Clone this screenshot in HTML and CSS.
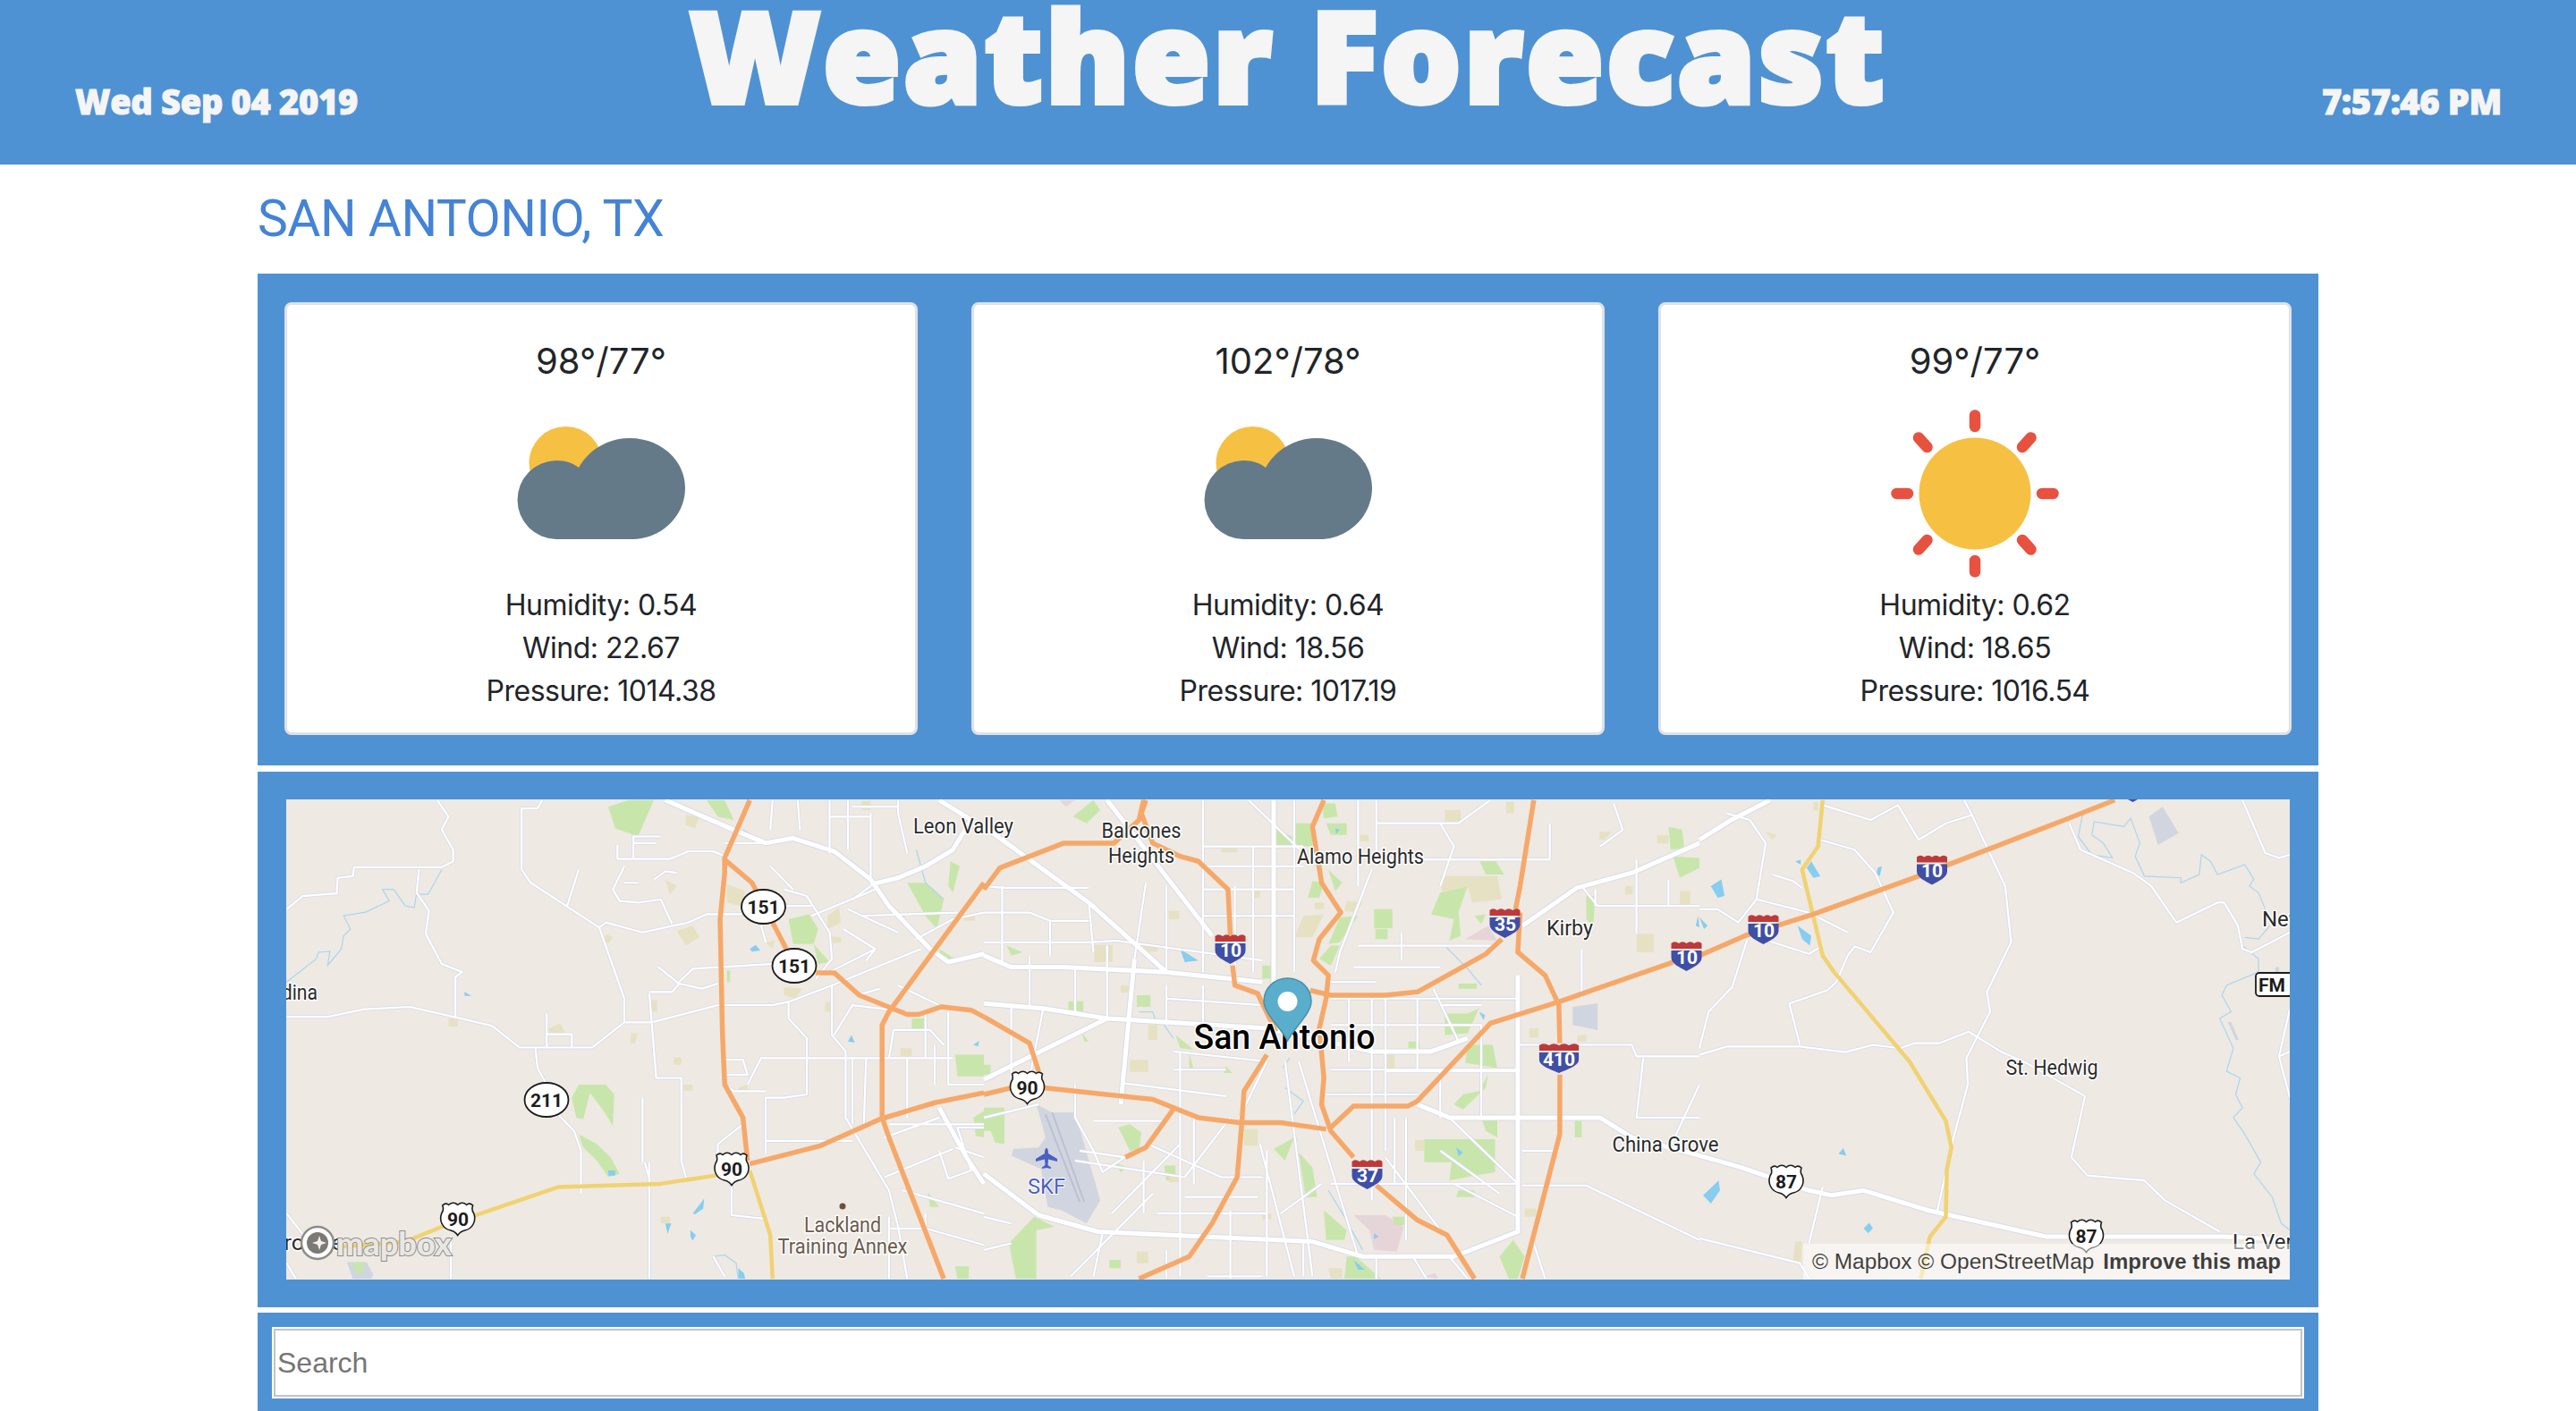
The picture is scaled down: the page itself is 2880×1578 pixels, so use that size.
FILE: index.html
```html
<!DOCTYPE html>
<html lang="en">
<head>
    <meta charset="UTF-8">
    <meta name="viewport" content="width=device-width, initial-scale=1.0">
    <title>Weather Forecast</title>
    <link rel="stylesheet" href="styles.css">
</head>
<body>
    <header class="top-bar">
        <span class="top-date">Wed Sep 04 2019</span>
        <h1 class="top-title">Weather Forecast</h1>
        <span class="top-time">7:57:46 PM</span>
    </header>
    <main class="content">
        <h2 class="city">SAN ANTONIO, TX</h2>

        <section class="forecast">
            <article class="card">
                <h3 class="temp">98°/77°</h3>
                <svg class="weather-icon" viewBox="0 0 188 188"><use href="#icon-cloudy"/></svg>
                <p class="stat">Humidity: 0.54</p>
                <p class="stat">Wind: 22.67</p>
                <p class="stat">Pressure: 1014.38</p>
            </article>
            <article class="card">
                <h3 class="temp">102°/78°</h3>
                <svg class="weather-icon" viewBox="0 0 188 188"><use href="#icon-cloudy"/></svg>
                <p class="stat">Humidity: 0.64</p>
                <p class="stat">Wind: 18.56</p>
                <p class="stat">Pressure: 1017.19</p>
            </article>
            <article class="card">
                <h3 class="temp">99°/77°</h3>
                <svg class="weather-icon" viewBox="0 0 188 188"><use href="#icon-sunny"/></svg>
                <p class="stat">Humidity: 0.62</p>
                <p class="stat">Wind: 18.65</p>
                <p class="stat">Pressure: 1016.54</p>
            </article>
        </section>

        <section class="map-box">
            <div class="map">
                <svg class="map-svg" viewBox="320 894 2240 537">
                    <defs>
                        <!-- roads are traced in three strips, each with its own scale -->
                        <g id="minor-roads">
                            <g transform="translate(300 880) scale(.5102 .3699)">
                                <path d="M40 370L75 330L150 322L152 275L185 270L188 243H380L405 225V190L380 130L395 90L370 40"/>
                                <path d="M40 695H130L210 672L310 665L490 722L550 788H710L780 712H840L985 660H1105L1140 650L1235 600L1430 490"/>
                                <path d="M410 695V575L425 560L380 535L345 445L352 375L325 320L330 250"/>
                                <path d="M600 40L590 65H555V250L575 290L725 425L780 640V712"/>
                                <path d="M725 425L740 410L820 440L920 410L960 385H1040"/>
                                <path d="M655 360L680 250M585 790L590 850L610 900M635 990L670 1040L685 1100V1230"/>
                                <path d="M610 685V790M612 748H665V790"/>
                                <path d="M835 625L850 880H905V1130L915 1180M835 1135V1487M825 1135L836 1190"/>
                                <path d="M765 175V218H880L920 195H975L1010 215M800 218V150H860M800 170H850"/>
                                <path d="M855 545L900 595L885 620H835M900 595L950 610L985 595M900 590L930 550L1110 535"/>
                                <path d="M780 240L755 310L770 345L810 350L860 340L885 415M780 290L810 290M845 280L870 255L895 260"/>
                                <path d="M1130 310L1180 330L1230 440L1235 520L1200 580M1140 650V700L1180 760V930L1130 940H1090V1110"/>
                                <path d="M1000 825H1040L1050 870H1000M1050 900L1080 820H1500M1000 900L1020 920H1090"/>
                                <path d="M1235 600V750L1265 800V1000L1360 1220L1380 1330L1400 1487"/>
                                <path d="M1310 820L1305 1020M1350 1180L1500 1095M1390 1220L1568 1290M1360 1335H1440L1568 1385"/>
                                <path d="M1040 1020L985 1080V1130M1090 1070H1280M1015 1200V1295L1085 1305M400 1360V1487"/>
                                <path d="M1240 750L1280 660L1400 680M1290 630L1340 610M1490 680V900M1230 560L1330 490M1260 430L1330 490L1310 525"/>
                                <path d="M1270 370L1380 440M1300 390L1510 380M1280 340L1320 300M1370 735H1450L1480 780M1370 735L1360 820M1460 780V900"/>
                                <path d="M1080 420L1090 470M1105 40L1100 130M1160 40L1165 130M1230 40V200M1270 40V190M1320 80V280M1380 40V80L1400 200"/>
                                <path d="M1130 360H1190M1190 390L1330 310M1280 60H1380M1230 90H1320"/>
                                <path d="M1470 1100L1490 1185L1540 1160L1510 1030H1568M1505 1090L1568 1120M1360 1300V1487M1440 1290V1330"/>
                                <path d="M40 1290L80 1360M40 1440L60 1487M975 1420L1000 1480M820 940V1135"/>
                                <path d="M1380 600L1470 660M1440 680V820M1400 820V1000M1360 1020H1568M1470 1000L1350 1060M1100 240L1150 310M1000 170H1100M1420 460L1500 400L1568 380M1280 820V1020M1490 900H1568"/>
                            </g>
                            <g transform="translate(1100 880) scale(.5102 .3699)">
                                <path d="M0 380H100L145 405H230M0 470H230L290 465L610 525M40 300V540M230 350L240 500M355 290L330 520M145 405V510"/>
                                <path d="M480 40V560M680 40V560M820 40V300M860 40V240M850 250L780 500L770 560M580 40L700 200"/>
                                <path d="M860 110H1040L1110 40M480 180H700M860 220H1240M1240 110V220M1000 110L1030 180L1000 300M1380 50L1400 130L1350 180"/>
                                <path d="M915 440V525M820 480H1120M810 545H1000M750 590H860M760 640H1170M985 610L1040 770M1000 660H1090"/>
                                <path d="M1170 780H1262M1262 780H1420L1430 815H1568M760 855H1170M850 640V1250M880 640V1100M925 1000V1370"/>
                                <path d="M1020 1000L1170 1200M1180 1100H1260M1180 1205H1320L1568 1370M760 1200H1170M740 1200L650 1290M880 1120L1000 1340"/>
                                <path d="M430 800V1480M415 800L620 830M415 855H530M300 895L530 935M620 830L560 1000M660 830L720 1480M690 830L820 1420"/>
                                <path d="M200 900V1000L240 1100L260 1165L330 1100M240 1010H400M210 1100L310 1120M360 1080L520 1180H610M380 1290H620"/>
                                <path d="M440 1240H600M490 1480H610M280 1290L430 1080M540 1000L440 1180M620 1100V1480M605 1080L680 1480M190 1480L370 1230"/>
                                <path d="M0 1400L60 1380M0 1300L60 1320M1310 490V640M1310 300L1345 360H1568M1430 220V445M1445 820L1430 1000L1568 1000"/>
                                <path d="M1500 1100L1568 900M1340 310V360M1500 280V360M1000 1100L1130 1230M1030 1200L1170 1300M400 1400V1487M540 1280V1487"/>
                                <path d="M240 1480L260 1350M700 1380V1480M940 1420L970 1487M1020 1420L1060 1487M1200 1360L1230 1487M860 1420V1487"/>
                                <path d="M0 300L40 305H230M480 310H680M480 390H680M480 240H700M590 180V560M550 300V560M400 300V560M270 480V700M100 510V670M200 550V680"/>
                                <path d="M400 600V720M480 600V730M400 640L610 660M130 670L100 880M60 660V880M800 640V830M950 640V860M1000 860V1000M880 860H1170M750 930H950"/>
                                <path d="M760 720H1090M900 1000V1200M1090 720V1000M0 1000L120 960M200 1130L440 1180M460 1000V1200M350 1130V1290"/>
                            </g>
                            <g transform="translate(1900 880) scale(.5102 .3699)">
                                <path d="M270 55L375 100L435 55L480 160L540 110L597 85L670 300L683 470L630 620L637 680L585 820L588 900L555 1070L520 1290M597 85L580 40"/>
                                <path d="M265 160L340 190L385 260L425 380L375 500L340 482L325 510L300 590L280 615L197 655L220 780"/>
                                <path d="M0 810L60 785H220L320 802L380 780L440 790L470 775H525L590 740L660 800L710 830L845 935L815 1120L850 1175L975 1190L1020 1250L1140 1345"/>
                                <path d="M125 340L145 170L110 100L60 80M125 340L240 380M125 340L85 410L40 370H0M160 265L205 285L225 305M240 380L325 440"/>
                                <path d="M150 465L240 505L270 480M105 460L72 605L20 680L0 790"/>
                                <path d="M810 110L835 190L950 260L990 300L1045 410L1135 350H1150L1180 420L1190 490L1210 500L1294 440M1190 40L1240 200L1270 215L1294 205"/>
                                <path d="M1294 670L1270 815L1294 940M1294 800L1270 815M270 1210L240 1380M0 1365L220 1440L240 1487"/>
                            </g>
                        </g>
                        <g id="wide-roads">
                            <g transform="translate(300 880) scale(.5102 .3699)">
                                <path d="M870 40L1020 130L1090 170L1150 155L1240 195L1320 280L1360 360L1450 490L1490 530L1568 505"/>
                                <path d="M1320 295L1380 275L1440 240L1500 190L1540 100L1470 40M1470 970L1530 1120L1568 1200"/>
                            </g>
                            <g transform="translate(1100 880) scale(.5102 .3699)">
                                <path d="M635 40V700M0 510L60 545H170L400 560L610 590M0 655L130 670L270 700L620 730L850 800H980L1060 760M0 885L270 700"/>
                                <path d="M330 520L300 960M0 120L230 350L400 560M270 40L500 450"/>
                                <path d="M0 1170L120 1295L250 1345L720 1375L830 1420H1030L1170 1345V570"/>
                                <path d="M1180 420L1300 305L1420 260L1568 170M950 960L1020 1000H1350L1420 1060L1568 1115"/>
                            </g>
                            <g transform="translate(1900 880) scale(.5102 .3699)">
                                <path d="M155 40L70 100L0 160M0 1115L90 1150L240 1220L290 1235L360 1220L500 1280L760 1360H1150L1294 1370"/>
                            </g>
                        </g>
                        <path id="shield-inter" d="M-18.5-15Q-14-19.5-9.3-15.5Q-4.6-19.5 0-15.5Q4.6-19.5 9.3-15.5Q14-19.5 18.5-15V2C18.5 10 8 14 0 19C-8 14-18.5 10-18.5 2Z"/>
                        <g id="inter">
                            <use href="#shield-inter" class="shield-edge"/>
                            <path class="shield-red" d="M-17-14Q-13.5-17.5-8.5-14Q-4.5-17.5 0-14Q4.5-17.5 8.5-14Q13.5-17.5 17-14V-8H-17Z"/>
                            <path class="shield-blue" d="M-17-6H17V2C17 9 7 13 0 17C-7 13-17 9-17 2Z"/>
                        </g>
                        <g id="us">
                            <path class="shield-us" d="M-17-15Q-13-18.500-10-15.500Q-5-20 0-15.500Q5-20 10-15.500Q13-18.500 17-15Q15-10 18-6C21 2 17 11 8 13Q3 14 0 18.500Q-3 14-8 13C-17 11-21 2-18-6Q-15-10-17-15Z"/>
                        </g>
                    </defs>

                    <rect class="land" x="320" y="894" width="2240" height="537"/>

                    <g transform="translate(300 880) scale(.5102 .3699)">
                        <path class="airport" d="M172 1437H215L230 1475L225 1487H185Z"/>
                        <path class="park" d="M745 60L790 40H845L810 150L760 125ZM960 40H1000L1020 100L985 90ZM680 900H740L758 930L755 1025L735 980L705 925L690 1005L675 1000L665 940ZM680 1050L720 1080L750 1120L770 1170L745 1180L720 1130L690 1090ZM1140 400L1185 385L1205 430L1195 475L1230 530L1205 535L1195 475H1150ZM1505 810H1568V875H1510ZM1400 290H1440L1480 340L1465 430L1440 390ZM1495 225L1515 240L1500 320L1490 300ZM1410 700H1443V738H1410ZM1470 490L1505 520L1475 525ZM1445 1225L1470 1270H1450ZM1545 1000L1568 980V1060L1550 1055ZM1505 1450H1535V1487H1510ZM185 1437H208V1470H190ZM1005 555H1012V590H1005Z"/>
                        <path class="sand" d="M915 85L945 90L935 125L915 115ZM870 280L895 300L880 325ZM1005 295L1045 315L1035 360L1005 350ZM895 435L930 420L945 455L915 480ZM1225 390L1250 365L1255 410L1225 430ZM1090 470L1110 465L1105 490ZM1130 605L1170 610L1155 640L1130 630ZM395 700H415V725H395ZM740 445L755 455L745 472L735 470ZM840 645H852V680H840ZM615 730L640 715L650 745H615ZM795 745H810L803 775H793ZM888 817H905V840H888ZM910 900H930V918H910ZM1220 650H1232V680H1220ZM1385 790H1410V815H1385ZM1300 42H1320V70H1300ZM1235 452L1255 455V472H1235ZM1525 390H1548V405H1525ZM1030 910L1050 900V925H1035ZM860 1300H880V1320H860Z"/>
                        <path class="water" d="M1055 490L1068 478L1078 495L1060 498ZM430 620L445 632H430ZM1270 770L1278 750L1285 773ZM930 1290L955 1245L953 1275L935 1292ZM925 1340L937 1355L930 1372L925 1360ZM1030 1455L1042 1470L1045 1487H1030ZM745 1160H760V1175H745ZM1545 780L1558 768L1555 785ZM870 1320H883L875 1352Z"/>
                        <path class="stream" d="M40 590L105 520L110 500L135 497L130 540L160 490L165 450L180 430L165 390L215 378L265 345L250 310H275L300 360L320 365L325 320M330 325H350L380 250M1040 130L1080 160M1420 190L1440 290L1480 340M975 1420L1000 1415L1025 1440L1030 1487"/>
                    </g>
                    <g transform="translate(1100 880) scale(.5102 .3699)">
                        <path class="airport" d="M115 960L150 985H200L255 1250L225 1320L170 1280L140 1270L125 1155L60 1115L65 1095L120 1090L135 1060ZM1290 665L1345 655V735L1290 720Z"/>
                        <path class="runway" d="M135 990L210 1255M150 985L220 1255"/>
                        <path class="pink" d="M1055 460L1105 420L1125 465ZM810 1295H880L920 1330L905 1405L855 1400L845 1340ZM165 40H200L180 60ZM965 1480L990 1470L995 1487Z"/>
                        <path class="park" d="M195 90L240 40L255 70L225 110ZM680 110H720V180H680ZM640 130L675 150V180H640ZM740 50H770L775 90L745 95ZM750 110H795V145H760ZM720 285L745 290L735 335H710ZM755 250L785 290L770 315ZM855 370H895V428H855ZM858 430H885V460H858ZM780 395L820 390L780 470L755 475ZM760 480H780L760 540L735 520ZM980 385L1000 320L1060 300L1040 380L1045 450L1020 465L1030 400ZM1085 220H1120L1140 265H1100ZM1075 390L1100 385L1090 415ZM1010 685H1060L1085 670L1060 745L1010 750ZM1040 595H1080V610H1040ZM1060 780H1115L1125 850L1055 835ZM1105 870L1100 910L1050 975L1030 960L1050 930L1085 920ZM930 770H955V790H930ZM965 1065H1120V1165L1075 1175L1020 1190L1025 1135H965ZM1040 1220H1075V1240H1035ZM1090 1000H1125V1060L1100 1040ZM1295 1010H1310V1060H1295ZM1130 1420L1160 1370L1185 1420L1170 1487H1150ZM1320 330H1340L1335 420L1320 400ZM1500 120L1530 130L1535 185L1505 190ZM1510 210L1568 215V245L1525 275ZM335 630H365V665H335ZM185 648H218V680H185ZM50 480L85 500L60 510ZM215 745L230 770H220ZM0 840H15V870H0ZM0 970H45V1080L25 1075L15 1040H0ZM55 1380L110 1300L155 1330L115 1340V1487H70ZM395 1145H420V1190H400ZM275 1430H300V1455H275ZM295 1030L320 1020L345 1045L340 1100H320ZM285 1135L315 1150L300 1165ZM635 1095L680 1060L660 1130ZM690 1105L720 1150L730 1240L705 1240ZM745 1280L795 1340L790 1370H750ZM815 1420L870 1487H790L795 1420ZM895 1300H925V1325H900ZM420 750L460 795L430 790ZM450 805L460 855H450ZM530 845L545 865L525 865ZM610 540H630V580H610Z"/>
                        <path class="sand" d="M520 185H555V198H520ZM590 315H605V335H590ZM825 145H843V165H825ZM1010 70H1045V105H1010ZM1145 45H1162V80H1145ZM1000 270H1125L1135 340L1070 350L1060 300L1005 320ZM700 390L745 385L720 455H680ZM795 345L830 350L815 380L790 375ZM725 350H745V370H725ZM405 375H428V400H405ZM242 478H282V530H242ZM350 478H380V498H350ZM300 600H320V622H300ZM360 720H380V765H360ZM320 825H360V862H320ZM880 810H900V855H880ZM945 1068H965V1100H945ZM1195 730H1215V758H1195ZM570 1035H600V1085H570ZM610 1290H630V1308H610ZM335 1405H360V1440H335ZM1430 445H1468V500H1430ZM1185 1275H1210V1300H1185ZM1300 750H1320V770H1300ZM1405 300H1422V325H1405ZM1525 315H1548V365H1525ZM1475 145H1500V172H1475ZM1350 135H1375L1360 160H1348ZM405 1175H430V1195H405ZM755 1455H785V1487H760Z"/>
                        <path class="water" d="M430 490L470 525L440 530ZM1085 680L1098 690L1095 705ZM770 125L780 130L772 142ZM855 1350L865 1360L855 1368ZM1565 390L1568 425L1560 420ZM1035 1090L1050 1105L1040 1118ZM810 1430L835 1460H820Z"/>
                        <path class="stream" d="M655 850L670 820M660 910L700 950L680 990M755 1220L790 1300L830 1400M340 680H370L375 700L395 720L415 760M1010 480L1060 550L1090 600"/>
                    </g>
                    <g transform="translate(1900 880) scale(.5102 .3699)">
                        <path class="airport" d="M985 90L1015 60L1050 140L1005 175ZM1158 712L1165 710L1182 765L1175 765ZM1262 545H1270V562H1262Z"/>
                        <path class="water" d="M245 225L265 270L250 275L235 245ZM210 225L222 220V235ZM25 300L48 280L55 330L40 335ZM0 395L18 420L10 430ZM215 420L245 450L242 480L225 460ZM390 245L400 240L395 270L388 265ZM305 1110L315 1092L322 1115ZM8 1235L42 1190L45 1220L25 1260ZM360 1335L372 1318L380 1335L370 1350Z"/>
                        <path class="sand" d="M145 135L170 145L160 160ZM210 1375H225L222 1440L205 1430ZM250 45H260V72H250Z"/>
                        <path class="stream" d="M840 80L830 150L860 205L905 215L885 170L860 145L865 105L930 120L945 95L965 170L955 210L975 270L1055 275V290L1095 265L1100 205L1120 225L1135 265L1195 235L1215 280L1205 300L1225 320L1240 370M1195 455L1225 460L1250 420M1190 480L1225 520V560L1155 600L1145 630L1165 680L1140 700L1170 790L1155 860L1185 880L1175 930L1190 970L1170 1000L1195 1050L1230 1135L1215 1170L1255 1240L1275 1320L1294 1340"/>
                    </g>

                    <use href="#minor-roads" class="road-case"/>
                    <use href="#wide-roads" class="wide-case"/>
                    <use href="#minor-roads" class="road-fill"/>
                    <use href="#wide-roads" class="wide-fill"/>

                    <g class="trunk" transform="translate(300 880) scale(.5102 .3699)">
                        <path d="M160 1390L300 1375L380 1330L635 1210L860 1200L980 1175L1050 1150M1055 1160L1100 1355L1105 1487"/>
                    </g>
                    <g class="trunk" transform="translate(1900 880) scale(.5102 .3699)">
                        <path d="M270 40L260 180L225 250L270 510L295 560L460 830L540 1010L552 1090L542 1160L540 1300L505 1360L485 1487"/>
                    </g>
                    <g class="highway" transform="translate(300 880) scale(.5102 .3699)">
                        <path d="M1055 40L1000 215V260L990 400L995 740L1000 900L1040 1000L1050 1130"/>
                        <path d="M1000 220L1060 290L1135 490"/>
                        <path d="M1200 562H1240L1295 630L1400 688H1425L1475 665L1540 675L1568 695"/>
                        <path d="M1568 290L1360 680L1345 720V1000L1360 1060L1480 1487"/>
                        <path d="M1055 1140L1210 1085L1340 1005L1460 955L1568 925"/>
                    </g>
                    <g class="highway" transform="translate(1100 880) scale(.5102 .3699)">
                        <path d="M0 310L35 245L175 170H285L340 100L350 40"/>
                        <path d="M355 40L345 80L370 170L430 210L470 225L535 310L540 450"/>
                        <path d="M545 540L550 600L600 625L640 740"/>
                        <path d="M745 40L720 120L740 290L782 380L735 460L722 525L755 570L750 640L735 730L745 880L740 960L760 1040L810 1120"/>
                        <path d="M715 615L760 630H880L950 620L1100 505L1135 460"/>
                        <path d="M1205 40L1175 300L1165 370M1175 380L1170 500L1230 570L1260 660L1262 775M1262 870V1050L1180 1487"/>
                        <path d="M1510 530L1260 650L1110 715L950 950L930 965H810L760 1030"/>
                        <path d="M0 695L100 775L120 860"/>
                        <path d="M0 930L60 910M130 910L370 945L470 1000L560 1015H650L750 1035"/>
                        <path d="M415 975L355 1090L310 1120"/>
                        <path d="M620 810L570 920L565 1020L555 1180L500 1320L450 1420L340 1487"/>
                        <path d="M860 1205L950 1310L1015 1355L1075 1487"/>
                    </g>
                    <g class="highway" transform="translate(1900 880) scale(.5102 .3699)">
                        <path d="M0 510L100 450L250 385L480 270L800 100L910 40"/>
                    </g>

                    <g class="label">
                        <text x="1077" y="932" textLength="112" lengthAdjust="spacingAndGlyphs" text-anchor="middle">Leon Valley</text>
                        <text x="1276" y="937" textLength="89" lengthAdjust="spacingAndGlyphs" text-anchor="middle">Balcones</text>
                        <text x="1276" y="965" textLength="74" lengthAdjust="spacingAndGlyphs" text-anchor="middle">Heights</text>
                        <text x="1521" y="966" textLength="142" lengthAdjust="spacingAndGlyphs" text-anchor="middle">Alamo Heights</text>
                        <text x="1755" y="1046" textLength="52" lengthAdjust="spacingAndGlyphs" text-anchor="middle">Kirby</text>
                        <text x="2294" y="1202" textLength="103" lengthAdjust="spacingAndGlyphs" text-anchor="middle">St. Hedwig</text>
                        <text x="1862" y="1288" textLength="119" lengthAdjust="spacingAndGlyphs" text-anchor="middle">China Grove</text>
                        <text x="355" y="1118" text-anchor="end" textLength="70" lengthAdjust="spacingAndGlyphs">Medina</text>
                        <text x="2529" y="1036">New Berlin</text>
                        <text x="2496" y="1397">La Vernia</text>
                        <text x="384" y="1398" text-anchor="end" textLength="118" lengthAdjust="spacingAndGlyphs">Castroville</text>
                    </g>
                    <g class="label label-brown">
                        <circle cx="942" cy="1349" r="3.500"/>
                        <text x="942" y="1378" textLength="86" lengthAdjust="spacingAndGlyphs" text-anchor="middle">Lackland</text>
                        <text x="942" y="1402" textLength="145" lengthAdjust="spacingAndGlyphs" text-anchor="middle">Training Annex</text>
                    </g>
                    <text class="label-big" x="1436" y="1173" textLength="203" lengthAdjust="spacingAndGlyphs" text-anchor="middle">San Antonio</text>
                    <g class="label-air">
                        <text x="1170" y="1335" textLength="42" lengthAdjust="spacingAndGlyphs" text-anchor="middle">SKF</text>
                        <path d="M1170 1284C1171.500 1284 1172 1287 1172 1290L1182 1296V1299L1172 1296.500L1171.500 1303L1175 1305.500V1307L1170 1306L1165 1307V1305.500L1168.500 1303L1168 1296.500L1158 1299V1296L1168 1290C1168 1287 1168.500 1284 1170 1284Z"/>
                    </g>

                    <!-- route badges -->
                    <g class="badges">
                        <use href="#inter" x="1375.500" y="1061"/>
                        <use href="#inter" x="1682.500" y="1032"/>
                        <use href="#inter" x="1885.500" y="1069"/>
                        <use href="#inter" x="1528.500" y="1313"/>
                        <use href="#inter" x="1971.500" y="1039"/>
                        <use href="#inter" x="2160" y="972.500"/>
                        <use href="#inter" x="2384.500" y="880"/>
                        <use href="#inter" transform="translate(1743 1183) scale(1.300 1)"/>
                        <use href="#us" x="511.700" y="1363"/>
                        <use href="#us" x="818" y="1307"/>
                        <use href="#us" x="1148.500" y="1216"/>
                        <use href="#us" x="1997" y="1321"/>
                        <use href="#us" x="2332.500" y="1382"/>
                        <ellipse class="shield-state" cx="853.500" cy="1014" rx="24.500" ry="19"/>
                        <ellipse class="shield-state" cx="888" cy="1080" rx="24.500" ry="19"/>
                        <ellipse class="shield-state" cx="611" cy="1230" rx="24.500" ry="19"/>
                        <rect class="shield-state" x="2522" y="1088" width="60" height="26" rx="4"/>
                        <g class="badge-dark">
                            <text x="853.500" y="1022">151</text>
                            <text x="888" y="1088">151</text>
                            <text x="611" y="1238">211</text>
                            <text x="512" y="1371">90</text>
                            <text x="818" y="1315">90</text>
                            <text x="1148.500" y="1224">90</text>
                            <text x="1997" y="1329">87</text>
                            <text x="2332.500" y="1390">87</text>
                            <text x="2540" y="1109">FM</text>
                        </g>
                        <g class="badge-light">
                            <text x="1376" y="1070">10</text>
                            <text x="1683" y="1041">35</text>
                            <text x="1886" y="1078">10</text>
                            <text x="1529" y="1322">37</text>
                            <text x="1972" y="1048">10</text>
                            <text x="2160" y="981">10</text>
                            <text x="1743" y="1192">410</text>
                        </g>
                    </g>

                    <!-- marker -->
                    <path class="pin" d="M1439.500 1164C1431 1148 1413 1133 1413 1120C1413 1105 1425 1094 1439.500 1094C1454 1094 1466 1105 1466 1120C1466 1133 1448 1148 1439.500 1164Z"/>
                    <circle class="pin-hole" cx="1439.500" cy="1120" r="11"/>
                </svg>

                <div class="map-logo">
                    <svg class="map-logo-mark" viewBox="0 0 42 42">
                        <circle cx="21" cy="21" r="18" fill="#fff" stroke="#8f8c88" stroke-width="2.500"/>
                        <circle cx="21" cy="21" r="12" fill="#7d7a76"/>
                        <path d="M23 13L25 19L31 21L25 23L23 29L21 23L15 21L21 19Z" fill="#f3f1ee"/>
                    </svg>
                    <span class="map-logo-text">mapbox</span>
                </div>
                <div class="map-credit">
                    <span class="map-credit-src">© Mapbox © OpenStreetMap</span>
                    <strong>Improve this map</strong>
                </div>
            </div>
        </section>

        <section class="search-box">
            <input class="search-input" type="text" placeholder="Search">
        </section>
    </main>

    <svg class="icon-defs" width="0" height="0">
        <defs>
            <g id="icon-cloudy">
                <circle cx="54.500" cy="60" r="41" fill="#f6c042"/>
                <path fill="#647a89" d="M44 145A44 44 0 0 1 .5 101A44 44 0 0 1 44 57C55 57 63 60 69 65C80 45 102 32 126 32C160 32 188 56 188 88C188 120 160 145 130 145Z"/>
            </g>
            <g id="icon-sunny">
                <circle cx="94" cy="94" r="62.500" fill="#f6c042"/>
                <g stroke="#e75240" stroke-width="12.500" stroke-linecap="round">
                    <path d="M94 6.500V19M94 169V181.500M6.500 94H19M169 94H181.500"/>
                    <path d="M31 31.500L40.500 42M147 42L156.500 31.500M40.500 146L31 156.500M147 146L156.500 156.500"/>
                </g>
            </g>
        </defs>
    </svg>
</body>
</html>
```

FILE: styles.css
```css
html, body {
    margin: 0;
    padding: 0;
    background-color: #fff;
}
body {
    font-family: Inter, "Liberation Sans", sans-serif;
    color: #212529;
    overflow: hidden;
}

/* top bar */
.top-bar {
    display: grid;
    grid-template-columns: 1fr auto 1fr;
    align-items: end;
    height: 184px;
    padding: 0 83px 0 84px;
    box-sizing: border-box;
    background-color: #4f92d3;
    color: #f5f5f5;
    font-family: "Open Sans", sans-serif;
}
.top-date,
.top-time {
    font-size: 38px;
    font-weight: 800;
    line-height: 50px;
    padding-bottom: 46px;
    -webkit-text-stroke: 1px #f5f5f5;
    letter-spacing: -0.3px;
}
.top-time {
    text-align: right;
}
.top-title {
    margin: -31px 0 0;
    font-size: 140px;
    font-weight: 800;
    line-height: 184px;
    height: 184px;
    padding-bottom: 31px;
    letter-spacing: 3.5px;
    white-space: nowrap;
    -webkit-text-stroke: 6px #f5f5f5;
}

.content {
    width: 2304px;
    margin: 0 auto;
}
.city {
    margin: 0;
    height: 122px;
    font-family: Roboto, sans-serif;
    font-size: 57px;
    font-weight: 400;
    line-height: 122px;
    color: #4483d6;
    letter-spacing: -0.5px;
}

/* forecast cards */
.forecast {
    display: grid;
    grid-template-columns: repeat(3, 1fr);
    column-gap: 60px;
    height: 550px;
    padding: 32px 30px 34px;
    box-sizing: border-box;
    background-color: #4f92d3;
}
.card {
    display: flex;
    flex-direction: column;
    align-items: center;
    background-color: #fff;
    border: 3px solid #dfe1e4;
    border-radius: 8px;
}
.temp {
    margin: 39px 0 0;
    font-size: 40px;
    font-weight: 400;
    line-height: 48px;
}
.weather-icon {
    width: 188px;
    height: 188px;
    margin: 30px 0 7px;
}
.stat {
    margin: 0;
    font-size: 32px;
    line-height: 48px;
    letter-spacing: -0.5px;
}
.icon-defs {
    position: absolute;
}

/* map */
.map-box {
    margin-top: 7px;
    padding: 31px 32px;
    background-color: #4f92d3;
}
.map {
    position: relative;
    height: 537px;
    overflow: hidden;
}
.map-svg {
    display: block;
    width: 2240px;
    height: 537px;
}
.map-svg path {
    vector-effect: non-scaling-stroke;
    fill: none;
}
.land { fill: #eee9e3; }
.map-svg .park { fill: #c8e6ab; }
.map-svg .sand { fill: #e6e1c2; }
.map-svg .water { fill: #86cdf0; }
.map-svg .pink { fill: #e6d5d8; }
.map-svg .airport { fill: #d1d5e0; }
.map-svg .stream { stroke: #a9d6ee; stroke-width: 1.2px; }
.map-svg .runway { stroke: #bcc0d2; stroke-width: 2px; }
.road-case { stroke: #d8dbe8; stroke-width: 3.8px; stroke-linejoin: round; }
.road-fill { stroke: #fff; stroke-width: 2.2px; stroke-linejoin: round; }
.wide-case { stroke: #d8dbe8; stroke-width: 7px; stroke-linejoin: round; }
.wide-fill { stroke: #fff; stroke-width: 5px; stroke-linejoin: round; }
.highway { stroke: #f6a869; stroke-width: 5.5px; stroke-linejoin: round; }
.trunk { stroke: #f0d272; stroke-width: 4.5px; stroke-linejoin: round; }

.label text,
.label-big,
.label-air text {
    font-family: Roboto, sans-serif;
    font-size: 24px;
    paint-order: stroke;
    stroke: #fff;
    stroke-width: 3px;
    stroke-linejoin: round;
}
.label text { fill: #2b2b2b; }
.label-brown text { fill: #6b5a4e; }
.label-brown circle { fill: #6b4f3c; }
.label-big {
    font-size: 38px;
    font-weight: 500;
    fill: #000;
}
.label-air text { fill: #4a5fc0; stroke-width: 2px; }
.map-svg .label-air path { fill: #4a5fc0; }

.map-svg .shield-edge { fill: #fff; }
.map-svg .shield-red { fill: #bd3a3a; }
.map-svg .shield-blue { fill: #3f4fa6; }
.map-svg .shield-us { fill: #fff; stroke: #1c1c1c; stroke-width: 1.6px; }
.shield-state { fill: #fff; stroke: #1c1c1c; stroke-width: 1.8px; }
.badges text {
    font-family: Roboto, sans-serif;
    font-size: 21px;
    font-weight: 700;
    text-anchor: middle;
}
.badge-dark text { fill: #1c1c1c; }
.badge-light text { fill: #fff; }
.map-svg .pin { fill: #5aaecb; stroke: #4a8fa8; stroke-width: 1.5px; }
.pin-hole { fill: #fff; }

.map-logo {
    position: absolute;
    left: 14px;
    top: 475px;
    display: flex;
    align-items: center;
}
.map-logo-mark {
    width: 42px;
    height: 42px;
}
.map-logo-text {
    font-family: Lato, sans-serif;
    font-size: 36px;
    font-weight: 900;
    line-height: 42px;
    color: #e9e7e3;
    -webkit-text-stroke: 2px #8f8c88;
    paint-order: stroke;
}
.map-credit {
    position: absolute;
    right: 0;
    bottom: 0;
    display: flex;
    gap: 10px;
    align-items: center;
    height: 40px;
    padding: 0 10px;
    background-color: rgba(255, 255, 255, 0.5);
    color: rgba(0, 0, 0, 0.75);
    font-family: "Liberation Sans", sans-serif;
    font-size: 24px;
}
.map-credit-src {
    font-size: 24.4px;
}

/* search */
.search-box {
    margin-top: 6px;
    height: 110px;
    padding: 16px;
    box-sizing: border-box;
    background-color: #4f92d3;
}
.search-input {
    display: block;
    width: 100%;
    height: 80px;
    padding: 0 4px;
    box-sizing: border-box;
    border: 2px solid #fff;
    outline: 2px solid #c4c4c4;
    outline-offset: -4px;
    background-color: #fff;
    font-family: "Liberation Sans", sans-serif;
    font-size: 32px;
}
.search-input::placeholder {
    color: #757575;
}
```
